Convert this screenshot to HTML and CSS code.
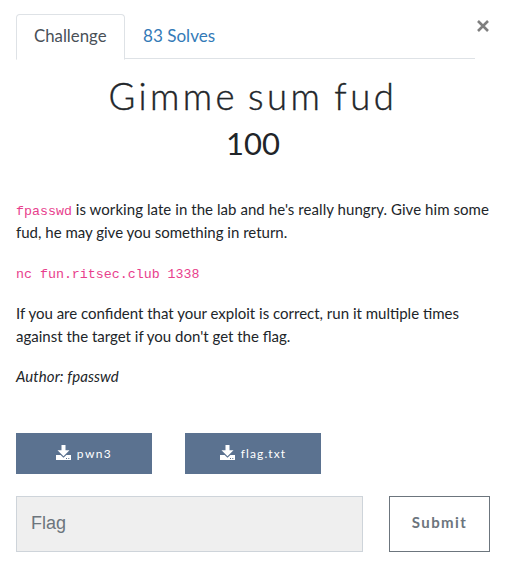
FILE: index.html
```
<!DOCTYPE html>
<html lang="en">
<head>
<meta charset="utf-8">
<title>Challenge</title>
<link rel="stylesheet" href="styles.css">
</head>
<body>
<main class="modal">
  <header class="head">
    <nav class="tabs">
      <a class="tab active">Challenge</a>
      <a class="tab solves">83 Solves</a>
    </nav>
    <span class="close">
      <svg width="12" height="12" viewBox="0 0 12 12"><path d="M1 1L11 11M11 1L1 11" stroke="#7f7f7f" stroke-width="2.6"/></svg>
    </span>
  </header>
  <h1 class="title"><span class="wide">Gimme</span> <span>sum</span> <span>fud</span></h1>
  <h2 class="points">100</h2>
  <section class="desc">
    <p class="intro"><code>fpasswd</code> is working late in the lab and he's really hungry. Give him some</p>
    <p>fud, he may give you something in return.</p>
    <p class="command"><code>nc fun.ritsec.club 1338</code></p>
    <p>If you are confident that your exploit is correct, run it multiple times<br>against the target if you don't get the flag.</p>
    <p><em>Author: fpasswd</em></p>
  </section>
  <div class="files">
    <a class="file"><svg class="icon" viewBox="0 0 16 16"><path d="M5.5 0h4v5.2h4L7.5 11.3 1.5 5.2h4z"/><path fill-rule="evenodd" d="M0 10h4.6l2.9 2.8 2.9-2.8H15v5H0zM10 13h1v1h-1zM12.3 13h1v1h-1z"/></svg><span>pwn3</span></a>
    <a class="file"><svg class="icon" viewBox="0 0 16 16"><path d="M5.5 0h4v5.2h4L7.5 11.3 1.5 5.2h4z"/><path fill-rule="evenodd" d="M0 10h4.6l2.9 2.8 2.9-2.8H15v5H0zM10 13h1v1h-1zM12.3 13h1v1h-1z"/></svg><span class="tight">flag.txt</span></a>
  </div>
  <form class="answer">
    <input class="flag" type="text" placeholder="Flag">
    <button class="submit" type="button">Submit</button>
  </form>
</main>
</body>
</html>
```
FILE: styles.css
```
* { box-sizing: border-box; }
body {
  margin: 0;
  background: #fff;
  color: #212529;
  font: 15px/23px Lato, "Liberation Sans", sans-serif;
}
.modal { padding: 14px 17px 0 16px; }
.head { display: flex; height: 45px; }
.tabs {
  display: flex;
  width: 459px;
  border-bottom: 1px solid #dee2e6;
}
.tab {
  height: 45px;
  padding: 8px 17px 0;
  border: 1px solid transparent;
  color: #337ab7;
  font-size: 16.8px;
  line-height: 25px;
}
.tab.active {
  height: 46px;
  width: 109px;
  color: #495057;
  background: #fff;
  border-color: #dee2e6 #dee2e6 #fff;
  border-radius: 4px 4px 0 0;
}
.tab.solves { font-size: 17.1px; }
.close { padding: 6px 0 0 1.5px; line-height: 0; }
.title {
  margin: 15px 0 0;
  text-align: center;
  font-size: 36.5px;
  line-height: 44px;
  font-weight: 300;
  letter-spacing: 3.5px;
  word-spacing: -2.5px;
  white-space: nowrap;
  -webkit-text-stroke: 0.4px #212529;
}
.title .wide { letter-spacing: 3.4px; margin-right: -1px; }
.points {
  margin: 5px 0 0;
  text-align: center;
  font-size: 31px;
  line-height: 40px;
  font-weight: 400;
}
.desc { margin-top: 35px; height: 235px; }
.desc p { margin: 0 0 17px; white-space: nowrap; }
.desc .intro { margin: 0; letter-spacing: 0.06px; }
.desc .command { line-height: 24px; }
.desc em { letter-spacing: 0.08px; }
code {
  color: #e83e8c;
  font: 13.3px/15px "Liberation Mono", monospace;
  letter-spacing: 0;
}
.command code { position: relative; top: -1px; }
.files { display: flex; gap: 33px; }
.file {
  display: flex;
  justify-content: center;
  align-items: center;
  gap: 5px;
  width: 136px;
  height: 41px;
  background: #5b7290;
  color: #fff;
  font-size: 12px;
  letter-spacing: 1.4px;
}
.tight { letter-spacing: 1.1px; }
.icon { width: 16px; height: 16px; fill: #fff; position: relative; top: -1px; }
.answer { display: flex; justify-content: space-between; margin-top: 22px; }
.flag {
  width: 347px;
  height: 56px;
  padding: 0 14px 2px;
  border: 1px solid #ced4da;
  border-radius: 0;
  background: #efefef;
  font: 18px "Liberation Sans", sans-serif;
}
.flag::placeholder { color: #6c757d; opacity: 1; }
.submit {
  width: 101px;
  height: 56px;
  padding: 0 0 4px;
  border: 1px solid #6c757d;
  background: #fff;
  color: #6c757d;
  font: 700 15px Lato, sans-serif;
  letter-spacing: 1.4px;
}
```
